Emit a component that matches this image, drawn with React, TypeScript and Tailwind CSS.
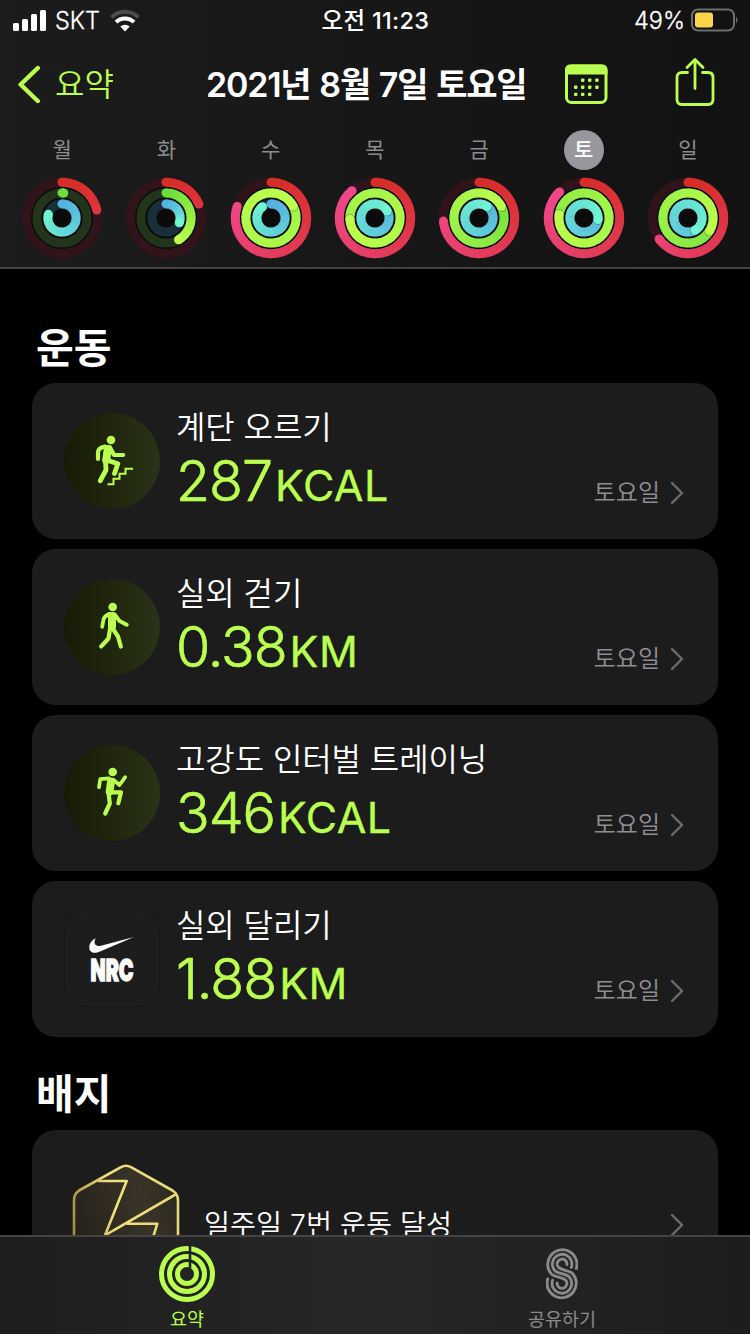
import React from 'react';

const FONT = 'font-[Inter,"Noto_Sans_CJK_KR",sans-serif]';

type Rgb = [number, number, number];

interface Day {
  label: string;
  move: number;
  exercise: number;
  stand: number;
  selected?: boolean;
}

// ring values are degrees, anything above 360 is a second lap
const days: Day[] = [
  { label: '월', move: 77, exercise: 4, stand: 285 },
  { label: '화', move: 67, exercise: 150, stand: 110 },
  { label: '수', move: 289, exercise: 1142, stand: 323 },
  { label: '목', move: 320, exercise: 987, stand: 420 },
  { label: '금', move: 265, exercise: 423, stand: 395 },
  { label: '토', move: 317, exercise: 638, stand: 456, selected: true },
  { label: '일', move: 234, exercise: 481, stand: 510 },
];

const workouts = [
  { name: '계단 오르기', value: '287', unit: 'KCAL', icon: <StairsIcon /> },
  { name: '실외 걷기', value: '0.38', unit: 'KM', icon: <WalkIcon /> },
  { name: '고강도 인터벌 트레이닝', value: '346', unit: 'KCAL', icon: <HiitIcon /> },
  { name: '실외 달리기', value: '1.88', unit: 'KM', icon: <NrcIcon /> },
];

export default function App() {
  return (
    <div className={`${FONT} flex h-[1334px] w-[750px] flex-col overflow-hidden bg-black text-white`}>
      <header className="h-[269px] shrink-0 border-b-2 border-[#424242] bg-linear-to-r from-[#1c1c1c] via-[#171717] to-[#121212]">
        <StatusBar />
        <NavBar />
        <div className="flex px-[10px] pt-[2px]">
          {days.map((day) => (
            <DayColumn key={day.label} day={day} />
          ))}
        </div>
      </header>

      <main className="min-h-0 flex-1 overflow-hidden px-8">
        <h2 className="mt-[54px] h-[60px] pl-[4px] text-[41px] font-bold leading-[50px]">운동</h2>
        <div className="flex flex-col gap-[10px]">
          {workouts.map((w) => (
            <div key={w.name} className="flex h-[156px] rounded-[24px] bg-[#1c1c1c] pl-8 pr-[34px]">
              <div className="mt-[30px] h-24 w-24 shrink-0">{w.icon}</div>
              <div className="ml-4 flex-1 pt-6">
                <p className="whitespace-nowrap text-[32px] font-[350] leading-[42px] tracking-[-0.1px]">{w.name}</p>
                <p className="mt-[4px] flex items-baseline gap-[3px] text-[#baff4f]">
                  <span className="text-[55.5px] font-light leading-[56px] tracking-[-1px] [-webkit-text-stroke:0.7px_#baff4f]">
                    {w.value}
                  </span>
                  <span className="text-[43px] font-normal leading-[56px] tracking-[0.4px] [-webkit-text-stroke:0.3px_#baff4f]">
                    {w.unit}
                  </span>
                </p>
              </div>
              <div className="flex items-center gap-[10px] self-start pt-[95px] text-[#8e8e93]">
                <span className="text-[24px] font-[350] leading-[30px]">토요일</span>
                <ChevronRight />
              </div>
            </div>
          ))}
        </div>
        <h2 className="mt-[31px] h-[62px] pl-[4px] text-[41px] font-bold leading-[52px]">배지</h2>
        <div className="flex h-[190px] rounded-[24px] bg-[#1c1c1c] pl-[39px] pr-[34px] pt-[30px]">
          <BadgeIcon />
          <p className="ml-[23px] flex-1 pt-[45px] text-[28.3px] font-[350] leading-[40px]">일주일 7번 운동 달성</p>
          <div className="pt-[53px]">
            <ChevronRight />
          </div>
        </div>
      </main>

      <nav className="flex h-[99px] shrink-0 border-t-2 border-[#444] bg-linear-to-r from-[#1e1e1e] via-[#272727] to-[#1d1d1d]">
        <div className="flex w-[374px] flex-col items-center pt-[8px] text-[#baff4f]">
          <RingsTabIcon />
          <span className="mt-[4px] text-[18.5px] leading-[24px]">요약</span>
        </div>
        <div className="flex flex-1 flex-col items-center pt-[11px] text-[#8a8a8a]">
          <SharingTabIcon />
          <span className="mt-[7px] text-[18.5px] leading-[24px]">공유하기</span>
        </div>
      </nav>
    </div>
  );
}

function StatusBar() {
  return (
    <div className="grid h-[40px] grid-cols-3 items-center pl-[13px] pr-[12px] text-[23.5px]">
      <div className="flex items-center">
        <svg width="34" height="22" viewBox="0 0 34 22" fill="#fff">
          <rect x="0" y="14" width="6" height="8" rx="1.5" />
          <rect x="9" y="10" width="6" height="12" rx="1.5" />
          <rect x="18" y="5" width="6" height="17" rx="1.5" />
          <rect x="27" y="1" width="6" height="21" rx="1.5" />
        </svg>
        <span className="ml-[8px] pt-[1px] font-light [-webkit-text-stroke:0.3px_#fff]">SKT</span>
        <svg className="ml-[10px]" width="30" height="23" viewBox="0 0 30 23" fill="none" strokeWidth="4">
          <path d="M1.5 8.3 A19.2 19.2 0 0 1 28.5 8.3" stroke="#4c4c4c" />
          <path d="M6 13.2 A12.8 12.8 0 0 1 24 13.2" stroke="#fff" />
          <path d="M10.3 17.6 A6.8 6.8 0 0 1 19.7 17.6 L15 22.4 Z" fill="#fff" />
        </svg>
      </div>
      <span className="whitespace-nowrap pt-[1px] text-center text-[23.5px] font-medium tracking-[0.3px]">오전 11:23</span>
      <div className="flex items-center justify-end">
        <span className="pt-[1px] font-light [-webkit-text-stroke:0.3px_#fff]">49%</span>
        <svg className="ml-[5px]" width="48" height="24" viewBox="0 0 48 24">
          <rect x="2" y="1.5" width="42" height="21" rx="6" fill="none" stroke="#6d6d6d" strokeWidth="2" />
          <rect x="5" y="4.5" width="18" height="15" rx="3" fill="#f8d648" />
          <path d="M46 8.5 Q49 12 46 15.5 Z" fill="#6d6d6d" />
        </svg>
      </div>
    </div>
  );
}

function NavBar() {
  return (
    <div className="flex h-[88px] items-center pl-[18px] text-[#baff4f]">
      <svg width="24" height="40" viewBox="0 0 24 40" fill="none" stroke="currentColor" strokeWidth="4.4" strokeLinecap="round" strokeLinejoin="round">
        <path d="M19.8 4 L2.6 20.5 L19.8 37" />
      </svg>
      <span className="ml-[13px] w-[58px] whitespace-nowrap pt-[1px] text-[32px] font-[350]">요약</span>
      <h1 className="ml-[93px] w-[320px] whitespace-nowrap text-[34px] font-semibold tracking-[-1.2px] text-white [word-spacing:1.5px]">
        2021년 8월 7일 토요일
      </h1>
      <svg className="ml-[38px]" width="44" height="40" viewBox="0 0 44 40">
        <rect x="2.5" y="2" width="39.5" height="36.5" rx="5" fill="none" stroke="currentColor" strokeWidth="3" />
        <path d="M1 10.5 V6 Q1 0.5 6.5 0.5 H38 Q43.5 0.5 43.5 6 V10.5 Z" fill="currentColor" />
        <g fill="currentColor">
          <rect x="17" y="14.5" width="3.4" height="3.4" rx="0.8" />
          <rect x="24" y="14.5" width="3.4" height="3.4" rx="0.8" />
          <rect x="31.2" y="14.5" width="3.4" height="3.4" rx="0.8" />
          <rect x="10" y="21.5" width="3.4" height="3.4" rx="0.8" />
          <rect x="17" y="21.5" width="3.4" height="3.4" rx="0.8" />
          <rect x="24" y="21.5" width="3.4" height="3.4" rx="0.8" />
          <rect x="31.2" y="21.5" width="3.4" height="3.4" rx="0.8" />
          <rect x="10" y="28.7" width="3.4" height="3.4" rx="0.8" />
          <rect x="17" y="28.7" width="3.4" height="3.4" rx="0.8" />
          <rect x="24" y="28.7" width="3.4" height="3.4" rx="0.8" />
        </g>
      </svg>
      <svg className="ml-[67px] -mt-1" width="40" height="50" viewBox="0 0 40 50" fill="none" stroke="currentColor" strokeWidth="2.8" strokeLinecap="round" strokeLinejoin="round">
        <path d="M12.5 15.5 H7 Q2 15.5 2 20.5 V42.5 Q2 47.5 7 47.5 H33 Q38 47.5 38 42.5 V20.5 Q38 15.5 33 15.5 H27.5" />
        <path d="M20 31.5 V3 M12 10.5 L20 2.5 L28 10.5" />
      </svg>
    </div>
  );
}

function DayColumn({ day }: { day: Day }) {
  return (
    <div className="flex flex-1 flex-col items-center">
      <div
        className={`flex h-10 w-10 items-center justify-center rounded-full text-[21px] ${
          day.selected ? 'bg-[#98979d] font-medium text-white' : 'text-[#8d8d90]'
        }`}
      >
        {day.label}
      </div>
      <svg className="mt-[6px]" width="84" height="84" viewBox="-42 -42 84 84">
        <circle r="31" fill="#0b0b0b" />
        <Ring r={35.7} degrees={day.move} fullAt={300} track="#30141a" from={[214, 45, 38]} to={[238, 72, 138]} />
        <Ring r={25.1} degrees={day.exercise} track="#22351b" from={[108, 222, 62]} to={[190, 255, 78]} />
        <Ring r={14.1} degrees={day.stand} track="#1a2f3a" from={[84, 178, 224]} to={[112, 246, 210]} />
      </svg>
    </div>
  );
}

interface RingProps {
  r: number;
  degrees: number;
  // angle at which the end colour is reached, defaults to the ring's own end
  fullAt?: number;
  track: string;
  from: Rgb;
  to: Rgb;
}

function Ring({ r, degrees, fullAt = degrees, track, from, to }: RingProps) {
  const color = (deg: number) => {
    const t = Math.min(1, deg / fullAt);
    return `rgb(${from.map((c, i) => Math.round(c + (to[i] - c) * t)).join(',')})`;
  };
  const point = (deg: number) => {
    const a = (deg * Math.PI) / 180;
    return [Math.sin(a) * r, -Math.cos(a) * r];
  };
  // only the last lap is visible, draw it in slices so the colour follows the arc
  const start = Math.max(0, degrees - 360);
  const step = 10;
  const slices: React.ReactNode[] = [];
  for (let d = start; d < degrees; d += step) {
    const [x1, y1] = point(d);
    const [x2, y2] = point(Math.min(d + step + 2, degrees));
    slices.push(
      <path key={d} d={`M${x1} ${y1} A${r} ${r} 0 0 1 ${x2} ${y2}`} stroke={color(d)} strokeWidth="9" fill="none" />
    );
  }
  const [sx, sy] = point(0);
  const [ex, ey] = point(degrees);
  const [hx, hy] = point(degrees + 70 / r);
  const short = degrees < 10;
  return (
    <g>
      <circle r={r} fill="none" stroke={track} strokeWidth="9" />
      {degrees < 360 && <circle cx={sx} cy={sy} r="4.5" fill={color(0)} />}
      {slices}
      {degrees > 360 && <circle cx={hx} cy={hy} r="4.3" fill="#1c4a20" opacity="0.35" />}
      <circle cx={ex} cy={ey} r="4.5" fill={color(short ? 0 : degrees)} />
    </g>
  );
}

function ChevronRight() {
  return (
    <svg width="14" height="24" viewBox="0 0 14 24" fill="none" stroke="#6c6c70" strokeWidth="2.4" strokeLinecap="round" strokeLinejoin="round">
      <path d="M2 2 L12 12 L2 22" />
    </svg>
  );
}

function WorkoutCircle({ children }: { children: React.ReactNode }) {
  return (
    <div className="h-24 w-24 rounded-full bg-linear-to-r from-[#171b06] to-[#2a3317] text-[#baff4f]">
      <svg width="96" height="96" viewBox="0 0 96 96" fill="none" stroke="currentColor" strokeWidth="4.2" strokeLinecap="round" strokeLinejoin="round">
        {children}
      </svg>
    </div>
  );
}

function StairsIcon() {
  return (
    <WorkoutCircle>
      <circle cx="47" cy="27" r="4.3" fill="currentColor" stroke="none" />
      <path d="M43.8 36 L42.2 47" strokeWidth="8" />
      <path d="M41 33.6 Q34.2 35 34 39 V46" />
      <path d="M46 34.5 L50 42 H59.2" />
      <path d="M44 47.5 L53.8 50.8 L50.5 60.5" strokeWidth="4.8" />
      <path d="M41.5 48 L42 57 L36.2 67.8" strokeWidth="4.8" />
      <path d="M43.5 71.3 H49.5 V65.7 H55.5 V60.7 H61.5 V55.7 H69" strokeWidth="2" strokeLinecap="butt" strokeLinejoin="miter" />
    </WorkoutCircle>
  );
}

function WalkIcon() {
  return (
    <WorkoutCircle>
      <circle cx="48.7" cy="28" r="4.3" fill="currentColor" stroke="none" />
      <path d="M48 37 V47.5" strokeWidth="8" />
      <path d="M45.5 34.9 Q39.7 37 39.2 42 L38.2 47.8" strokeWidth="3.8" />
      <path d="M50.5 35.2 L55.5 42 L62.8 45.8" strokeWidth="3.8" />
      <path d="M49 50 L54 57.5 L56.8 67.5" />
      <path d="M46 50 L44.5 59.5 L37.2 67.4" />
    </WorkoutCircle>
  );
}

function HiitIcon() {
  return (
    <WorkoutCircle>
      <circle cx="48.7" cy="27" r="4.3" fill="currentColor" stroke="none" />
      <path d="M47 36.5 L45.6 46.5" strokeWidth="7.8" />
      <path d="M45 33.4 L36.2 34.2 L35 42.2" strokeWidth="3.7" />
      <path d="M49.5 34.8 L55.5 40 L61.2 32.2" strokeWidth="3.7" />
      <path d="M46.5 47.3 H57 L54.3 58.2" />
      <path d="M44.5 47.5 L45.8 58.5 L41.2 68.5" />
    </WorkoutCircle>
  );
}

function NrcIcon() {
  return (
    <div className="h-24 w-24 rounded-[22px] border border-[#181818] bg-[#1d1d1d]">
      <svg width="94" height="94" viewBox="1 1 94 94" fill="#fff">
        <path d="M70 26 L36 40.6 C29 43.5 25 41 25.3 35.5 C25.5 32 28 29 31.7 27 C29.3 31.5 30.5 36.2 37 34.8 Z" />
        <text x="26.5" y="69.6" textLength="43" lengthAdjust="spacingAndGlyphs" className="text-[30px] font-black" stroke="#fff" strokeWidth="1.3">
          NRC
        </text>
      </svg>
    </div>
  );
}

function BadgeIcon() {
  return (
    <svg width="110" height="120" viewBox="0 0 110 120" fill="none" strokeWidth="2.6" strokeLinejoin="round">
      <defs>
        <linearGradient id="gold" x1="0" y1="60" x2="110" y2="40" gradientUnits="userSpaceOnUse">
          <stop offset="0" stopColor="#a08c45" />
          <stop offset="0.4" stopColor="#f3e27c" />
          <stop offset="1" stopColor="#e6d878" />
        </linearGradient>
        <linearGradient id="plate" x1="0" y1="60" x2="110" y2="30" gradientUnits="userSpaceOnUse">
          <stop offset="0" stopColor="#25221b" />
          <stop offset="0.65" stopColor="#393427" />
          <stop offset="1" stopColor="#2a271f" />
        </linearGradient>
      </defs>
      <path
        d="M50 7.2 Q55 4.2 60 7.2 L101.5 30.5 Q107 34 107 40 V80 Q107 86 101.5 89.5 L60 113 Q55 116 50 113 L8 89.5 Q3 86 3 80 V40 Q3 34 8 30.5 Z"
        fill="url(#plate)"
        stroke="url(#gold)"
      />
      <path d="M27 21 H55.7 L34 75.3 L104.5 34.5 M55.7 63.7 H86.3 L80 84" stroke="url(#gold)" />
    </svg>
  );
}

function RingsTabIcon() {
  return (
    <svg width="58" height="58" viewBox="-29 -29 58 58" fill="none">
      <g stroke="currentColor" strokeWidth="5">
        <circle r="25.5" />
        <circle r="17.5" />
        <circle r="9.5" />
      </g>
      <path d="M3 -29 V-6" stroke="#232323" strokeWidth="2.6" />
    </svg>
  );
}

function SharingTabIcon() {
  return (
    <svg width="32" height="52" viewBox="0 0 32 52" fill="none" stroke="currentColor" strokeWidth="2.9" strokeLinecap="round">
      <path d="M30.3 20.5 A14.6 14.6 0 1 0 5.7 26.3 C9.2 29.6 16 28.6 19.5 32 A4.9 4.9 0 1 1 11.1 35" />
      <path d="M25.3 19.5 A9.8 9.8 0 1 0 9.1 22.9 C12.6 26.2 19.4 25.3 22.9 28.6 A9.8 9.8 0 1 1 6.6 32.2" />
      <path d="M20.9 16.5 A4.9 4.9 0 1 0 12.6 19.4 C16 22.7 22.9 21.9 26.3 25.2 A14.6 14.6 0 1 1 1.7 31" />
    </svg>
  );
}
